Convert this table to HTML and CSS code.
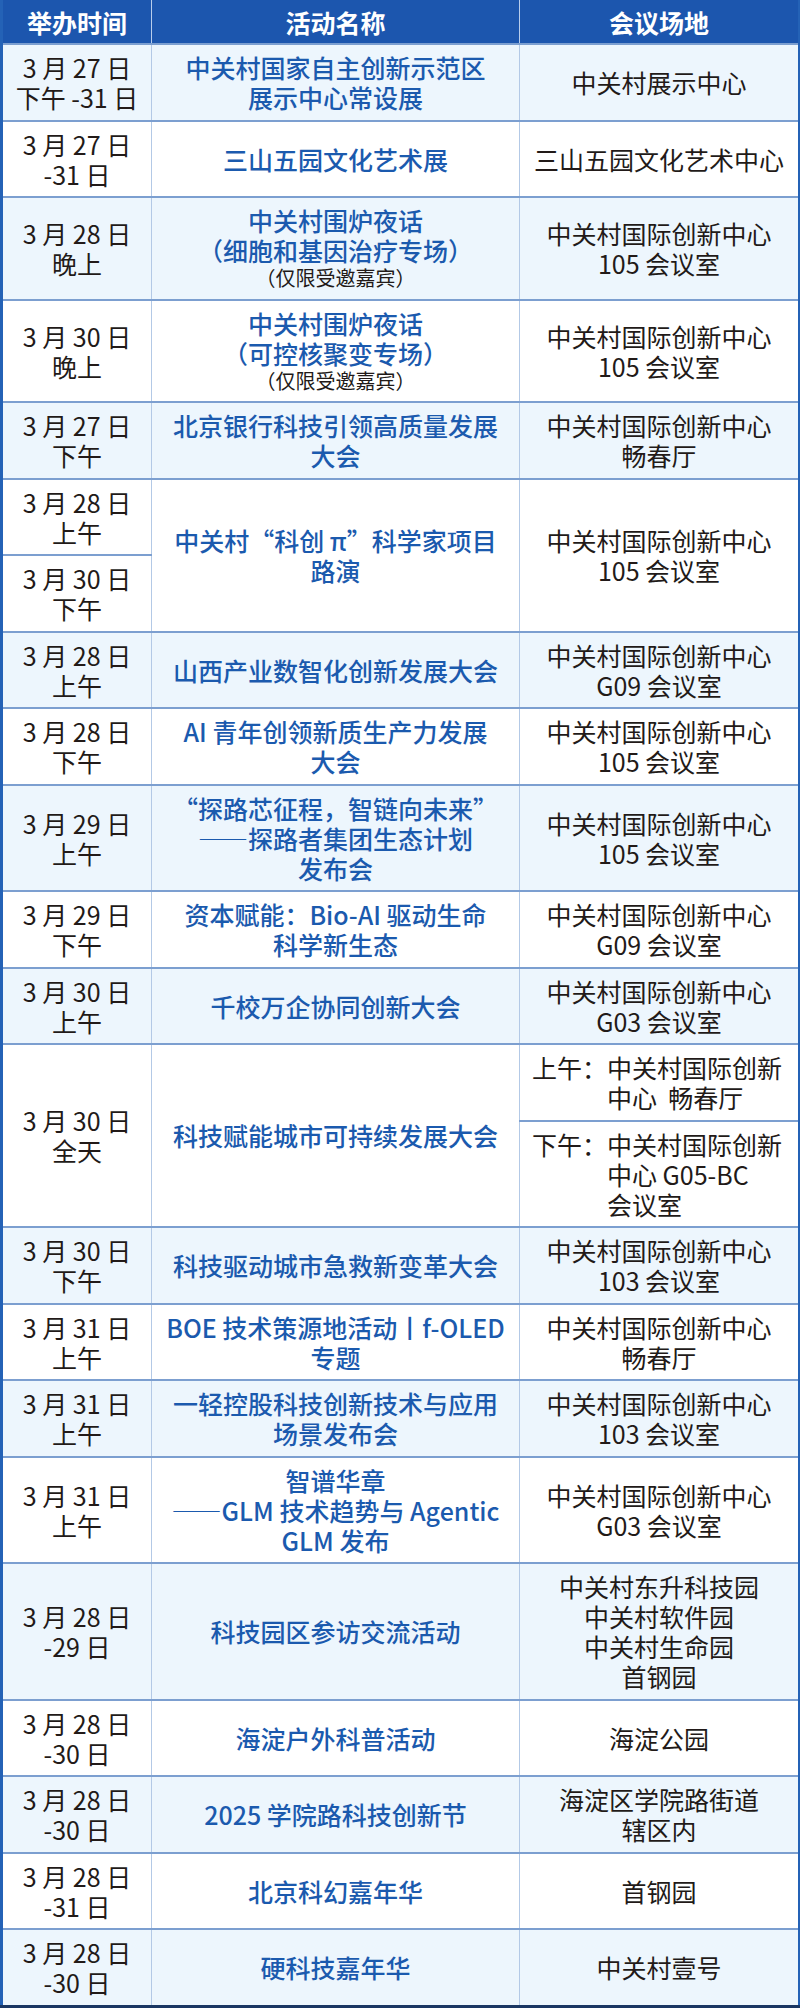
FILE: index.html
```html
<!DOCTYPE html>
<html lang="zh-CN">
<head>
<meta charset="utf-8">
<title>活动日程</title>
<link rel="stylesheet" href="styles.css">
</head>
<body>
<table class="schedule">
  <colgroup>
    <col class="c-date">
    <col class="c-name">
    <col class="c-venue">
  </colgroup>
  <thead>
    <tr>
      <th>举办时间</th>
      <th>活动名称</th>
      <th>会议场地</th>
    </tr>
  </thead>
  <tbody>
    <tr class="alt">
      <td>3 月 27 日<br>下午 -31 日</td>
      <td class="name">中关村国家自主创新示范区<br>展示中心常设展</td>
      <td>中关村展示中心</td>
    </tr>
    <tr>
      <td>3 月 27 日<br>-31 日</td>
      <td class="name">三山五园文化艺术展</td>
      <td>三山五园文化艺术中心</td>
    </tr>
    <tr class="alt">
      <td>3 月 28 日<br>晚上</td>
      <td class="name">中关村围炉夜话<br>（细胞和基因治疗专场）<span class="note">（仅限受邀嘉宾）</span></td>
      <td>中关村国际创新中心<br>105 会议室</td>
    </tr>
    <tr>
      <td>3 月 30 日<br>晚上</td>
      <td class="name">中关村围炉夜话<br>（可控核聚变专场）<span class="note">（仅限受邀嘉宾）</span></td>
      <td>中关村国际创新中心<br>105 会议室</td>
    </tr>
    <tr class="alt">
      <td>3 月 27 日<br>下午</td>
      <td class="name">北京银行科技引领高质量发展<br>大会</td>
      <td>中关村国际创新中心<br>畅春厅</td>
    </tr>
    <tr>
      <td>3 月 28 日<br>上午</td>
      <td class="name" rowspan="2">中关村“科创 π”科学家项目<br>路演</td>
      <td rowspan="2">中关村国际创新中心<br>105 会议室</td>
    </tr>
    <tr>
      <td>3 月 30 日<br>下午</td>
    </tr>
    <tr class="alt">
      <td>3 月 28 日<br>上午</td>
      <td class="name">山西产业数智化创新发展大会</td>
      <td>中关村国际创新中心<br>G09 会议室</td>
    </tr>
    <tr>
      <td>3 月 28 日<br>下午</td>
      <td class="name">AI 青年创领新质生产力发展<br>大会</td>
      <td>中关村国际创新中心<br>105 会议室</td>
    </tr>
    <tr class="alt">
      <td>3 月 29 日<br>上午</td>
      <td class="name">“探路芯征程，智链向未来”<br>——探路者集团生态计划<br>发布会</td>
      <td>中关村国际创新中心<br>105 会议室</td>
    </tr>
    <tr>
      <td>3 月 29 日<br>下午</td>
      <td class="name">资本赋能：Bio-AI 驱动生命<br>科学新生态</td>
      <td>中关村国际创新中心<br>G09 会议室</td>
    </tr>
    <tr class="alt">
      <td>3 月 30 日<br>上午</td>
      <td class="name">千校万企协同创新大会</td>
      <td>中关村国际创新中心<br>G03 会议室</td>
    </tr>
    <tr>
      <td rowspan="2">3 月 30 日<br>全天</td>
      <td class="name" rowspan="2">科技赋能城市可持续发展大会</td>
      <td class="slot-cell"><div class="slot"><span class="slot-label">上午：</span><span class="slot-text">中关村国际创新<br>中心&nbsp;&nbsp;畅春厅</span></div></td>
    </tr>
    <tr>
      <td class="slot-cell"><div class="slot"><span class="slot-label">下午：</span><span class="slot-text">中关村国际创新<br>中心 G05-BC<br>会议室</span></div></td>
    </tr>
    <tr class="alt">
      <td>3 月 30 日<br>下午</td>
      <td class="name">科技驱动城市急救新变革大会</td>
      <td>中关村国际创新中心<br>103 会议室</td>
    </tr>
    <tr>
      <td>3 月 31 日<br>上午</td>
      <td class="name">BOE 技术策源地活动丨f-OLED<br>专题</td>
      <td>中关村国际创新中心<br>畅春厅</td>
    </tr>
    <tr class="alt">
      <td>3 月 31 日<br>上午</td>
      <td class="name">一轻控股科技创新技术与应用<br>场景发布会</td>
      <td>中关村国际创新中心<br>103 会议室</td>
    </tr>
    <tr>
      <td>3 月 31 日<br>上午</td>
      <td class="name">智谱华章<br>——GLM 技术趋势与 Agentic<br>GLM 发布</td>
      <td>中关村国际创新中心<br>G03 会议室</td>
    </tr>
    <tr class="alt">
      <td>3 月 28 日<br>-29 日</td>
      <td class="name">科技园区参访交流活动</td>
      <td>中关村东升科技园<br>中关村软件园<br>中关村生命园<br>首钢园</td>
    </tr>
    <tr>
      <td>3 月 28 日<br>-30 日</td>
      <td class="name">海淀户外科普活动</td>
      <td>海淀公园</td>
    </tr>
    <tr class="alt">
      <td>3 月 28 日<br>-30 日</td>
      <td class="name">2025 学院路科技创新节</td>
      <td>海淀区学院路街道<br>辖区内</td>
    </tr>
    <tr>
      <td>3 月 28 日<br>-31 日</td>
      <td class="name">北京科幻嘉年华</td>
      <td>首钢园</td>
    </tr>
    <tr class="alt">
      <td>3 月 28 日<br>-30 日</td>
      <td class="name">硬科技嘉年华</td>
      <td>中关村壹号</td>
    </tr>
  </tbody>
</table>
</body>
</html>
```

FILE: styles.css
```css
body {
  margin: 0;
  background: #ffffff;
  font-family: "Noto Sans CJK SC", "Noto Sans", sans-serif;
}

.schedule {
  width: 798px;
  border-collapse: collapse;
  table-layout: fixed;
  border-left: 3px solid #2462b6;
  border-right: 3px solid #2462b6;
  border-bottom: 3px solid #1b3763;
}

.c-date { width: 150px; }
.c-name { width: 368px; }
.c-venue { width: 280px; }

.schedule th {
  height: 43px;
  padding: 0;
  background: #1c56ae;
  color: #ffffff;
  font-size: 25px;
  font-weight: 700;
  line-height: 30px;
  text-align: center;
  border-left: 1px solid #b8cdec;
}

.schedule td {
  padding: 7px 3px 7.5px;
  font-size: 25px;
  font-weight: 400;
  line-height: 30px;
  color: #221a18;
  text-align: center;
  vertical-align: middle;
  white-space: nowrap;
  background: #ffffff;
  border-top: 2px solid #7c9fd0;
  border-left: 1px solid #b3c9e6;
}

.schedule tr.alt td {
  background: #edf6fd;
}

.schedule td.name {
  color: #1b5aae;
  font-weight: 500;
}

.note {
  display: block;
  font-size: 20px;
  font-weight: 400;
  line-height: 26px;
  color: #221a18;
}

.schedule td.slot-cell {
  text-align: left;
  padding-left: 12px;
}

.slot {
  display: flex;
}

.slot-label {
  flex: none;
}
```
